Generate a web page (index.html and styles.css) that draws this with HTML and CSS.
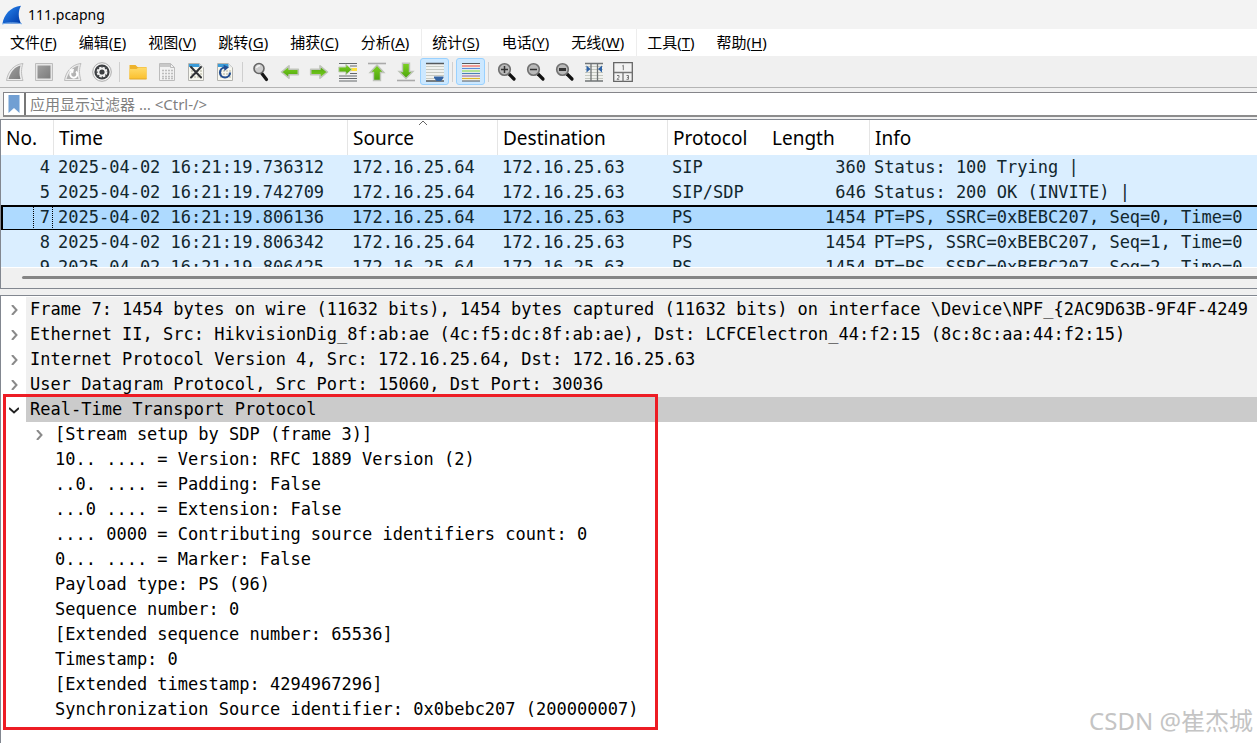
FILE: index.html
```html
<!DOCTYPE html>
<html lang="zh-CN">
<head>
<meta charset="utf-8">
<title>111.pcapng</title>
<link rel="stylesheet" href="styles.css">
</head>
<body>
<!-- shared symbols -->
<svg class="defs" aria-hidden="true">
<defs>
<linearGradient id="blue" x1="0" y1="0" x2="1" y2="1"><stop offset="0" stop-color="#2b8cf5"/><stop offset="1" stop-color="#0039a6"/></linearGradient>
<linearGradient id="green" x1="0" y1="0" x2="0" y2="1"><stop offset="0" stop-color="#7ed321"/><stop offset="1" stop-color="#4ba30c"/></linearGradient>
<linearGradient id="yellow" x1="0" y1="0" x2="0" y2="1"><stop offset="0" stop-color="#ffdb6b"/><stop offset="1" stop-color="#fbc02d"/></linearGradient>
<linearGradient id="gray" x1="0" y1="0" x2="1" y2="1"><stop offset="0" stop-color="#a0a0a0"/><stop offset="1" stop-color="#7c7c7c"/></linearGradient>
<symbol id="arrow" viewBox="0 0 20 20"><path d="M1.500 10 9 3.800v3.400h9.300v5.600H9v3.400z" fill="url(#green)" stroke="#bfc4ba" stroke-width="1.600" stroke-linejoin="round"/></symbol>
<symbol id="lens" viewBox="0 0 20 20"><path d="m12 12 5 5" stroke="#111" stroke-width="3.200" stroke-linecap="round"/><circle cx="7.500" cy="7.500" r="5.800" fill="#b9b9b9" stroke="#707070" stroke-width="1.600"/></symbol>
<symbol id="sheet" viewBox="0 0 20 20"><path d="M2.500 1.500h11l4 4v13h-15z" fill="#f7f7ef" stroke="#b4b4b0"/><path d="M3 2h10.300l3 3H3z" fill="#3a9bd8"/><path d="M13.500 1.500v4h4z" fill="#e8e8e8"/><path d="M5 9h11M5 12h11M5 15h11" stroke="#c9c9b8" stroke-width="1.600" stroke-dasharray="2 1"/></symbol>
</defs>
</svg>

<header class="titlebar">
<svg class="logo" viewBox="0 0 20 20"><path d="M.5 18.500C2 10 8 2 19 .8c-3 5-3 12 0 17.700z" fill="url(#blue)"/><path d="M0 19c5-1.500 14-1.500 20-.2" stroke="#78aeea" fill="none"/></svg>
<span>111.pcapng</span>
</header>

<nav class="menu">
<button>文件(<u>F</u>)</button>
<button>编辑(<u>E</u>)</button>
<button>视图(<u>V</u>)</button>
<button>跳转(<u>G</u>)</button>
<button>捕获(<u>C</u>)</button>
<button class="group-end">分析(<u>A</u>)</button>
<button>统计(<u>S</u>)</button>
<button>电话(<u>Y</u>)</button>
<button class="group-end">无线(<u>W</u>)</button>
<button>工具(<u>T</u>)</button>
<button>帮助(<u>H</u>)</button>
</nav>

<div class="toolbar">
<button aria-label="开始捕获"><svg viewBox="0 0 20 20"><path d="M1.500 18.500C3 9 9 2.500 18 1.500c-2 5-2 11 0 17z" fill="#ededed" stroke="#bdbdbd"/><path d="M3.500 17C5.500 10 9.500 5 15.500 3.500c-1.300 5-1.300 9 0 13.500z" fill="url(#gray)"/></svg></button>
<button aria-label="停止捕获"><svg viewBox="0 0 20 20"><path d="M1.500 1.500h17v17h-17z" fill="#e6e6e6" stroke="#bdbdbd"/><path d="M3.500 3.500h13v13h-13z" fill="url(#gray)"/></svg></button>
<button aria-label="重新捕获"><svg viewBox="0 0 20 20"><path d="M1.500 18.500C3 9 9 2.500 18 1.500c-2 5-2 11 0 17z" fill="#ededed" stroke="#bdbdbd"/><path d="M3.500 17C5.500 10 9.500 5 15.500 3.500c-1.300 5-1.300 9 0 13.500z" fill="#b2b2b2"/><path d="M8.500 9.500a3.500 3.500 0 1 0 4.500 0" fill="none" stroke="#fff" stroke-width="2"/><path d="m6 7.500 5-.5-1 4.500z" fill="#fff"/></svg></button>
<button aria-label="捕获选项"><svg viewBox="0 0 20 20"><circle cx="10" cy="10" r="9.300" fill="#f5f5f5" stroke="#aaa"/><circle cx="10" cy="10" r="7.600" fill="#3c3f42"/><circle cx="10" cy="10" r="4.300" fill="none" stroke="#f0f0f0" stroke-width="2.200" stroke-dasharray="2.400 .98"/><circle cx="10" cy="10" r="3.400" fill="none" stroke="#f0f0f0" stroke-width="1.600"/></svg></button>
<i class="sep"></i>
<button aria-label="打开"><svg viewBox="0 0 20 20"><path d="M1.500 3h6l2 2h9v12h-17z" fill="#eeb32c"/><path d="M1.500 7h7l2-1.500h8V17h-17z" fill="url(#yellow)"/><path d="M1.500 17h17" stroke="#e1a72b"/></svg></button>
<button aria-label="保存"><svg viewBox="0 0 20 20"><path d="M2.500 1.500h11l4 4v13h-15z" fill="#f2f2f2" stroke="#bcbcbc"/><path d="M3 2h10v3H3z" fill="#c8c8c8"/><path d="M13.500 1.500v4h4" fill="none" stroke="#bcbcbc"/><path d="M5 8.500h11M5 11.500h11M5 14.500h11M5 16.500h11" stroke="#bdbdbd" stroke-width="1.400" stroke-dasharray="2 1"/></svg></button>
<button aria-label="关闭"><svg viewBox="0 0 20 20"><use href="#sheet"/><path d="m5 5 10 10.500M15 5 5 15.500" stroke="#303236" stroke-width="2" stroke-linecap="round"/></svg></button>
<button aria-label="重新加载"><svg viewBox="0 0 20 20"><use href="#sheet"/><path d="M10 5.500a5 5 0 1 0 5 5" fill="none" stroke="#244f92" stroke-width="2.200"/><path d="m8.500 2.800 5.500 2.500-4.500 3.800z" fill="#244f92"/></svg></button>
<i class="sep"></i>
<button aria-label="查找"><svg viewBox="0 0 20 20"><path d="m10.500 11 5 6.500" stroke="#161616" stroke-width="3.200" stroke-linecap="round"/><circle cx="8" cy="6.500" r="5" fill="#cdcdcd" stroke="#666" stroke-width="1.600"/><path d="M5.500 6A3 3 0 0 1 9 3.800" fill="none" stroke="#f5f5f5" stroke-width="1.400"/></svg></button>
<button aria-label="上一分组"><svg viewBox="0 0 20 20"><use href="#arrow"/></svg></button>
<button aria-label="下一分组"><svg viewBox="0 0 20 20"><use href="#arrow" transform="rotate(180 10 10)"/></svg></button>
<button aria-label="转到分组"><svg viewBox="0 0 20 20"><path d="M1 1.500h18M1 14h18M1 16.500h18M1 19h18M12 4h7M12 11.500h7" stroke="#64686a" stroke-width="1.200"/><path d="M12 7.500h7" stroke="#fce13c" stroke-width="3"/><path d="M.8 5h7V2.200l6.200 5.300-6.200 5.300V10h-7z" fill="url(#green)" stroke="#c5cdbd"/></svg></button>
<button aria-label="首个分组"><svg viewBox="0 0 20 20"><path d="M1 1.500h18" stroke="#aaa" stroke-width="1.600"/><path d="m10 3 7 7.500h-3.500v8h-7v-8H3z" fill="url(#green)" stroke="#bfc4ba" stroke-width="1.400"/></svg></button>
<button aria-label="最新分组"><svg viewBox="0 0 20 20"><path d="M1 18.500h18" stroke="#aaa" stroke-width="1.600"/><path d="m10 16.500 7-7h-3.500V1.200h-7v8.300H3z" fill="url(#green)" stroke="#bfc4ba" stroke-width="1.400"/></svg></button>
<button class="on" aria-label="自动滚动" aria-pressed="true"><svg viewBox="0 0 20 20"><path d="M1 2h18v17H1z" fill="#f0f2ef"/><path d="M1 1.500h18M1 19h18" stroke="#55595c" stroke-width="1.400"/><path d="M1 4.500h18M1 7.500h18M1 10.500h18M1 13.500h18M1 16.500h8" stroke="#c6c9c2" stroke-width="1.200"/><path d="M9 14.500h9.500v1.500l-2.500 3h-4.500L9 16z" fill="#3465a4"/></svg></button>
<i class="sep"></i>
<button class="on" aria-label="着色" aria-pressed="true"><svg viewBox="0 0 20 20"><path d="M1 1h18v18H1z" fill="#f2f4f0"/><path d="M1 1.500h18M1 19h18" stroke="#55595c" stroke-width="1.200"/><path d="M1 4h18" stroke="#ef5d58" stroke-width="1.200"/><path d="M1 6.500h18" stroke="#5d8bd8" stroke-width="1.200"/><path d="M1 9h18" stroke="#86d85a" stroke-width="1.200"/><path d="M1 11.500h18" stroke="#4b80b8" stroke-width="1.200"/><path d="M1 14h18" stroke="#9470aa" stroke-width="1.200"/><path d="M1 16.500h18" stroke="#dcb62d" stroke-width="1.200"/></svg></button>
<i class="sep"></i>
<button aria-label="放大"><svg viewBox="0 0 20 20"><use href="#lens"/><path d="M4 7.500h7M7.500 4v7" stroke="#333" stroke-width="1.500"/></svg></button>
<button aria-label="缩小"><svg viewBox="0 0 20 20"><use href="#lens"/><path d="M4 7.500h7" stroke="#333" stroke-width="1.500"/></svg></button>
<button aria-label="普通大小"><svg viewBox="0 0 20 20"><use href="#lens"/><path d="M4 7.500h7" stroke="#333" stroke-width="3"/></svg></button>
<button aria-label="调整列宽"><svg viewBox="0 0 20 20"><path d="M1 1h18v18H1z" fill="#f0f1ee"/><path d="M1 4.500h18M1 7.500h18M1 10.500h18M1 13.500h18M1 16.500h18" stroke="#c5c8c0"/><path d="M1 1.500h18M1 19h18M7 1v18M13.500 1v18" stroke="#707476" stroke-width="1.300"/><path d="M2.500 3.500 6.500 7l-4 3.500zM18 3.500 14 7l4 3.500z" fill="#2e62a6"/></svg></button>
<button aria-label="重置布局"><svg viewBox="0 0 20 20"><path d="M.7 .7h18.600v18.600H.7z" fill="#f3f3f3" stroke="#666" stroke-width="1.300"/><path d="M.7 10.500h18.600M10 10.500v9" stroke="#777" stroke-width="1.300"/><path d="m9.300 4 1-.8v5M4 13.500h2v1.800L4 17.300h2.200M13.500 13.500h2v3.800h-2M14 15.400h1.500" fill="none" stroke="#777"/></svg></button>
</div>

<div class="filter">
<button class="bookmark" aria-label="书签"><svg viewBox="0 0 12 18"><path d="M.5 0h11v18L6 13 .5 18z" fill="#719fd3"/></svg></button>
<input type="text" aria-label="应用显示过滤器" placeholder="应用显示过滤器 … &lt;Ctrl-/&gt;">
</div>

<section class="packets">
<div class="packets-view">
<table>
<colgroup><col class="c-no"><col class="c-time"><col class="c-src"><col class="c-dst"><col class="c-proto"><col class="c-len"><col></colgroup>
<thead>
<tr><th>No.</th><th>Time</th><th class="sorted">Source<svg viewBox="0 0 10 6"><path d="m1 5 4-4 4 4" fill="none" stroke="#666"/></svg></th><th>Destination</th><th class="plain">Protocol</th><th>Length</th><th class="plain">Info</th></tr>
</thead>
<tbody>
<tr><td>4</td><td>2025-04-02 16:21:19.736312</td><td>172.16.25.64</td><td>172.16.25.63</td><td>SIP</td><td>360</td><td>Status: 100 Trying |</td></tr>
<tr><td>5</td><td>2025-04-02 16:21:19.742709</td><td>172.16.25.64</td><td>172.16.25.63</td><td>SIP/SDP</td><td>646</td><td>Status: 200 OK (INVITE) |</td></tr>
<tr class="selected"><td><span>7</span></td><td>2025-04-02 16:21:19.806136</td><td>172.16.25.64</td><td>172.16.25.63</td><td>PS</td><td>1454</td><td>PT=PS, SSRC=0xBEBC207, Seq=0, Time=0</td></tr>
<tr><td>8</td><td>2025-04-02 16:21:19.806342</td><td>172.16.25.64</td><td>172.16.25.63</td><td>PS</td><td>1454</td><td>PT=PS, SSRC=0xBEBC207, Seq=1, Time=0</td></tr>
<tr><td>9</td><td>2025-04-02 16:21:19.806425</td><td>172.16.25.64</td><td>172.16.25.63</td><td>PS</td><td>1454</td><td>PT=PS, SSRC=0xBEBC207, Seq=2, Time=0</td></tr>
</tbody>
</table>
</div>
<div class="scroll"><div class="thumb"></div></div>
</section>

<section class="tree">
<ul>
<li><button aria-label="展开"><svg viewBox="0 0 10 10"><path d="m3 0 4.500 5L3 10"/></svg></button><span>Frame 7: 1454 bytes on wire (11632 bits), 1454 bytes captured (11632 bits) on interface \Device\NPF_{2AC9D63B-9F4F-4249</span></li>
<li><button aria-label="展开"><svg viewBox="0 0 10 10"><path d="m3 0 4.500 5L3 10"/></svg></button><span>Ethernet II, Src: HikvisionDig_8f:ab:ae (4c:f5:dc:8f:ab:ae), Dst: LCFCElectron_44:f2:15 (8c:8c:aa:44:f2:15)</span></li>
<li><button aria-label="展开"><svg viewBox="0 0 10 10"><path d="m3 0 4.500 5L3 10"/></svg></button><span>Internet Protocol Version 4, Src: 172.16.25.64, Dst: 172.16.25.63</span></li>
<li><button aria-label="展开"><svg viewBox="0 0 10 10"><path d="m3 0 4.500 5L3 10"/></svg></button><span>User Datagram Protocol, Src Port: 15060, Dst Port: 30036</span></li>
</ul>
<div class="rtp">
<ul>
<li class="current"><button aria-label="折叠"><svg viewBox="0 0 10 10"><path d="m0 3 5 4.500L10 3"/></svg></button><span>Real-Time Transport Protocol</span></li>
</ul>
<ul class="fields">
<li><button aria-label="展开"><svg viewBox="0 0 10 10"><path d="m3 0 4.500 5L3 10"/></svg></button><span>[Stream setup by SDP (frame 3)]</span></li>
<li><span>10.. .... = Version: RFC 1889 Version (2)</span></li>
<li><span>..0. .... = Padding: False</span></li>
<li><span>...0 .... = Extension: False</span></li>
<li><span>.... 0000 = Contributing source identifiers count: 0</span></li>
<li><span>0... .... = Marker: False</span></li>
<li><span>Payload type: PS (96)</span></li>
<li><span>Sequence number: 0</span></li>
<li><span>[Extended sequence number: 65536]</span></li>
<li><span>Timestamp: 0</span></li>
<li><span>[Extended timestamp: 4294967296]</span></li>
<li><span>Synchronization Source identifier: 0x0bebc207 (200000007)</span></li>
</ul>
</div>
</section>
<div class="watermark">CSDN @崔杰城</div>
</body>
</html>
```

FILE: styles.css
```css
*,
*::after{
box-sizing: border-box;
margin: 0;
padding: 0;
}
body{
min-height: 100vh;
display: flex;
flex-direction: column;
overflow: hidden;
background: #f0f0f0;
color: #000;
font-family: "Noto Sans","Noto Sans CJK SC",sans-serif;
font-size: 15px;
}
button{
border: 0;
background: none;
font: inherit;
color: inherit;
}
ul{
list-style: none;
}
.defs{
position: absolute;
width: 0;
height: 0;
}
.titlebar{
display: flex;
align-items: center;
gap: 6px;
height: 29px;
padding-left: 2px;
background: #f3f3f3;
font-size: 14px;
}
.logo{
width: 20px;
height: 20px;
}
.menu{
display: flex;
height: 27px;
background: #fff;
}
.menu button{
padding: 0 12px 0 10px;
line-height: 25px;
white-space: nowrap;
}
.menu u{
text-underline-offset: 2px;
}
.menu .group-end{
border-right: 1px solid #ededed;
}
.toolbar{
display: flex;
align-items: center;
height: 32px;
border-bottom: 1px solid #b4b4b4;
}
.toolbar button{
display: flex;
align-items: center;
justify-content: center;
width: 29px;
height: 27px;
border: 1px solid transparent;
border-radius: 3px;
}
.toolbar .on{
background: #cce8ff;
border-color: #99d1ff;
}
.toolbar svg{
width: 20px;
height: 20px;
}
.sep{
width: 1px;
height: 20px;
margin: 0 3px;
background: #cfcfcf;
}
/* display filter */
.filter{
display: flex;
height: 25px;
margin: 4px 0 2px 3px;
border: 1px solid #85858a;
border-right: 0;
border-bottom: 2px solid #8c8c8c;
background: #fff;
}
.bookmark{
display: flex;
align-items: center;
justify-content: center;
width: 22px;
border-right: 2px solid #777;
}
.bookmark svg{
width: 12px;
height: 18px;
}
.filter input{
flex: 1;
min-width: 0;
padding-left: 4px;
border: 0;
outline: 0;
font: inherit;
}
.filter input::placeholder{
color: #7f7f7f;
}
/* packet list */
.packets{
border: 1px solid #828790;
border-right: 0;
}
.packets-view{
height: 147px;
overflow: hidden;
background: #fff;
}
table{
width: 100%;
table-layout: fixed;
border-collapse: collapse;
}
.c-no{
width: 53px;
}
.c-time{
width: 294px;
}
.c-src{
width: 150px;
}
.c-dst{
width: 170px;
}
.c-proto{
width: 99px;
}
.c-len{
width: 103px;
}
th{
position: relative;
height: 35px;
padding-left: 5px;
background: #fff;
box-shadow: inset -1px 0 #e5e5e5;
font-size: 19px;
font-weight: 400;
text-align: left;
}
th.plain{
box-shadow: none;
}
.sorted svg{
position: absolute;
top: 0;
left: calc(50% - 5px);
width: 10px;
height: 6px;
}
td{
height: 25px;
padding: 0 0 2px 4px;
background: #daeeff;
color: #12272e;
font-family: "DejaVu Sans Mono",monospace;
font-size: 17px;
line-height: 22px;
white-space: nowrap;
}
td:first-child,
td:nth-child(6){
padding: 0 4px 2px 0;
text-align: right;
}
.selected td{
background: #aedaff;
box-shadow: inset 0 2px #000, inset 0 -1px #000;
}
.selected td:first-child{
padding-right: 1px;
box-shadow: inset 2px 2px #000, inset 0 -1px #000;
}
.selected span{
display: inline-block;
padding: 0 2px 0 6px;
border-left: 1px dotted #000;
border-right: 1px dotted #000;
}
.scroll{
height: 21px;
padding: 8px 0 0 21px;
background: #f0f0f0;
border-top: 1px solid #fff;
}
.thumb{
height: 3px;
border-radius: 2px 0 0 2px;
background: #858585;
}
/* packet details */
.tree{
flex: 1;
margin-top: 6px;
padding-top: 1px;
border: 1px solid #828790;
border-right: 0;
border-bottom: 0;
background: #fff;
}
.tree li{
display: flex;
height: 25px;
font-family: "DejaVu Sans Mono",monospace;
font-size: 17px;
line-height: 25px;
white-space: nowrap;
}
.tree button{
display: flex;
align-items: center;
justify-content: center;
width: 25px;
}
.tree svg{
width: 10px;
height: 10px;
fill: none;
stroke: #8a8a8a;
stroke-width: 2;
}
.tree span{
flex: 1;
padding-left: 4px;
background: #f0f0f0;
}
.tree .current span{
background: #cbcbcb;
}
.tree .current svg{
stroke: #222;
}
.tree .fields{
padding-left: 25px;
}
.tree .fields span{
background: none;
}
.tree .fields span:only-child{
padding-left: 29px;
}
.rtp{
position: relative;
}
.rtp::after{
content: '';
position: absolute;
top: -3px;
left: 2px;
width: 655px;
bottom: -8px;
border: 3px solid #ed1c24;
pointer-events: none;
}
.watermark{
position: absolute;
right: 4px;
bottom: 6px;
color: #c4c4c4;
font-size: 24px;
line-height: 32px;
}
```
